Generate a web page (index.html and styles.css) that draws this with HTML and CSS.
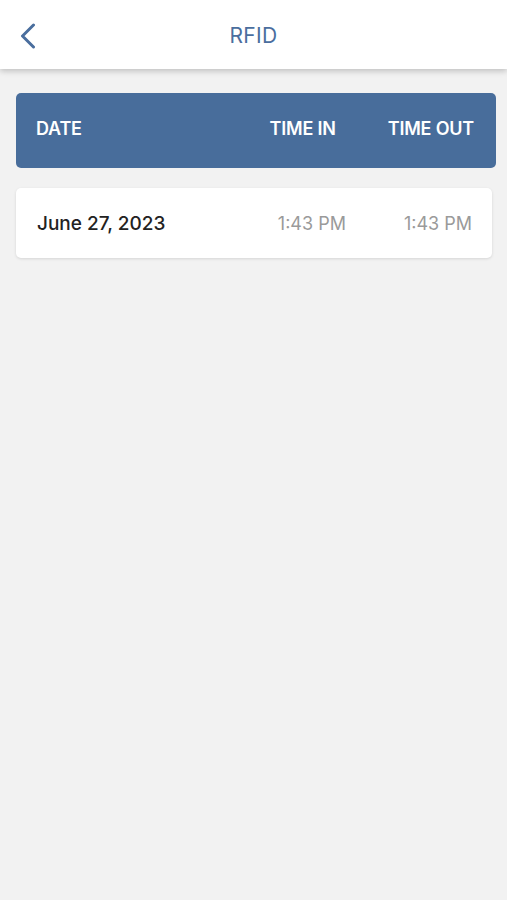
FILE: index.html
```html
<!DOCTYPE html>
<html lang="en">
<head>
    <meta charset="UTF-8">
    <meta name="viewport" content="width=device-width, initial-scale=1.0">
    <title>RFID</title>
    <link rel="stylesheet" href="styles.css">
</head>
<body>
    <div class="topbar">
        <a class="back" href="#">
            <svg width="16" height="26" viewBox="0 0 16 26">
                <path d="M13.5 2 L2.5 13 L13.5 24" fill="none" stroke="#4a6e9e" stroke-width="3" stroke-linecap="round" stroke-linejoin="round"/>
            </svg>
        </a>
        <div class="title">RFID</div>
    </div>

    <div class="content">
        <div class="table-head">
            <span class="col-date">DATE</span>
            <span>TIME IN</span>
            <span>TIME OUT</span>
        </div>

        <div class="log-row">
            <span class="col-date">June 27, 2023</span>
            <span class="time">1:43 PM</span>
            <span class="time">1:43 PM</span>
        </div>
    </div>
</body>
</html>
```

FILE: styles.css
```css
body {
    font-family: Inter, "Open Sans", Arial, sans-serif;
    background-color: #f2f2f2;
    margin: 0;
    padding: 0;
    min-height: 100vh;
}

.topbar {
    position: relative;
    height: 69px;
    background-color: #fff;
    box-shadow: 0 2px 6px rgba(0, 0, 0, 0.22);
    display: flex;
    align-items: center;
    justify-content: center;
}

.back {
    position: absolute;
    left: 20px;
    top: 23px;
    display: block;
    line-height: 0;
}

.title {
    color: #4a6e9e;
    font-size: 21px;
    font-weight: 400;
    letter-spacing: 0.3px;
    padding-top: 2px;
}

.content {
    padding: 24px 11px 0 16px;
}

.table-head {
    height: 75px;
    box-sizing: border-box;
    background-color: #486d9b;
    border-radius: 5px;
    color: #fff;
    font-size: 18px;
    font-weight: 600;
    letter-spacing: -0.2px;
    display: flex;
    align-items: center;
    padding: 0 22px 4px 20px;
    gap: 52px;
}

.col-date {
    flex: 1;
}

.log-row {
    margin-top: 20px;
    margin-right: 4px;
    height: 70px;
    background-color: #fff;
    border-radius: 5px;
    box-shadow: 0 1px 3px rgba(0, 0, 0, 0.12);
    display: flex;
    align-items: center;
    padding: 0 20px 0 21px;
    gap: 58px;
    font-size: 19px;
    font-weight: 500;
    color: #222;
}

.time {
    color: #9a9a9a;
    font-size: 18px;
    font-weight: 400;
}
```
